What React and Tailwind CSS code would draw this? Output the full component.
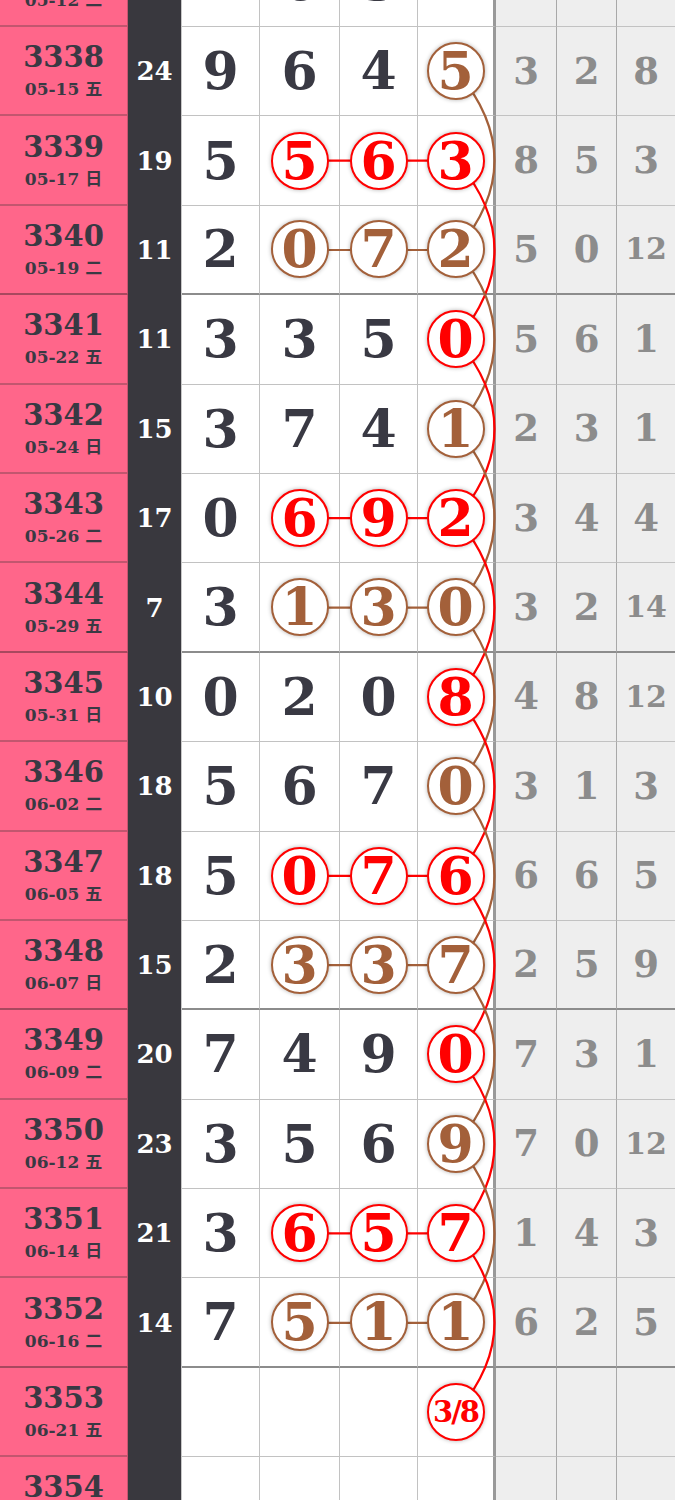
import React from "react";

// issue, date, sum, digits, marks (b = brown circle, r = red circle), grey cols
const rows = [
  ["3337", "05-12 二", "16", ["7", "6", "3", "7"], "----", ["4", "1", "2"]],
  ["3338", "05-15 五", "24", ["9", "6", "4", "5"], "---b", ["3", "2", "8"]],
  ["3339", "05-17 日", "19", ["5", "5", "6", "3"], "-rrr", ["8", "5", "3"]],
  ["3340", "05-19 二", "11", ["2", "0", "7", "2"], "-bbb", ["5", "0", "12"]],
  ["3341", "05-22 五", "11", ["3", "3", "5", "0"], "---r", ["5", "6", "1"]],
  ["3342", "05-24 日", "15", ["3", "7", "4", "1"], "---b", ["2", "3", "1"]],
  ["3343", "05-26 二", "17", ["0", "6", "9", "2"], "-rrr", ["3", "4", "4"]],
  ["3344", "05-29 五", "7", ["3", "1", "3", "0"], "-bbb", ["3", "2", "14"]],
  ["3345", "05-31 日", "10", ["0", "2", "0", "8"], "---r", ["4", "8", "12"]],
  ["3346", "06-02 二", "18", ["5", "6", "7", "0"], "---b", ["3", "1", "3"]],
  ["3347", "06-05 五", "18", ["5", "0", "7", "6"], "-rrr", ["6", "6", "5"]],
  ["3348", "06-07 日", "15", ["2", "3", "3", "7"], "-bbb", ["2", "5", "9"]],
  ["3349", "06-09 二", "20", ["7", "4", "9", "0"], "---r", ["7", "3", "1"]],
  ["3350", "06-12 五", "23", ["3", "5", "6", "9"], "---b", ["7", "0", "12"]],
  ["3351", "06-14 日", "21", ["3", "6", "5", "7"], "-rrr", ["1", "4", "3"]],
  ["3352", "06-16 二", "14", ["7", "5", "1", "1"], "-bbb", ["6", "2", "5"]],
  ["3353", "06-21 五", "", ["", "", "", "3/8"], "---r", ["", "", ""]],
  ["3354", "06-23 日", "", ["", "", "", ""], "----", ["", "", ""]],
];

const RED = "#ff0000";
const BROWN = "#a3603a";
const ROW_H = 89.4;
const TOP = 27; // top of row 3338
const COL_X = [221, 300, 379, 457];

const cy = (r) => TOP + r * ROW_H + 44.2;

const Circle = ({ color, text }) => {
  const small = text.length > 1;
  return (
    <div
      className={
        "relative z-10 flex h-[58px] w-[58px] items-center justify-center rounded-full border-2 bg-white font-bold leading-none shadow-[0_0_4px_rgba(0,0,0,0.3)] " +
        (color === "r" ? "border-[#ff0000] text-[#ff0000] " : "border-[#a3603a] text-[#a3603a] ") +
        (small ? "text-[29px] tracking-[-2px]" : "text-[52px]")
      }
    >
      {text}
    </div>
  );
};

const Row = ({ row }) => {
  const [no, date, sum, digits, marks, grey] = row;
  const groupEnd = ["3340", "3344", "3348", "3352"].includes(no);
  const cellB = groupEnd ? "border-b-2 border-b-[#8c8c8c]" : "border-b border-b-[#c2c2c2]";
  const pinkB = groupEnd ? "border-b-2 border-b-[#a9485f]" : "border-b-2 border-b-[#c2566f]";

  return (
    <div className="grid h-[89.4px] grid-cols-[128px_54px_78px_80px_78px_78px_61px_60px_58px]">
      <div className={"flex flex-col items-center justify-center border-r border-r-[#c85570] bg-[#ff668a] text-[#393943] " + pinkB}>
        <div className="text-[29px] font-bold leading-none">{no}</div>
        <div className="mt-[9px] text-[17px] font-bold leading-none">{date}</div>
      </div>
      <div className="flex items-center justify-center border-r border-r-[#c8c8c8] bg-[#39383e] text-[26px] font-bold text-white">
        {sum}
      </div>
      {digits.map((d, i) => (
        <div
          key={i}
          className={
            "flex items-center justify-center bg-white " +
            cellB +
            (i === 3 ? " border-r-[3px] border-r-[#999999]" : " border-r border-r-[#c2c2c2]")
          }
        >
          {marks[i] !== "-" ? (
            <Circle color={marks[i]} text={d} />
          ) : (
            <span className="text-[52px] font-bold leading-none text-[#393943]">{d}</span>
          )}
        </div>
      ))}
      {grey.map((g, i) => (
        <div
          key={i}
          className={
            "flex items-center justify-center bg-[#eeeeee] font-bold leading-none text-[#8c8c8c] " +
            cellB +
            (i < 2 ? " border-r border-r-[#a8a8a8]" : "") +
            (g.length > 1 ? " text-[30px]" : " text-[37px]")
          }
        >
          {g}
        </div>
      ))}
    </div>
  );
};

// line drawing over the table: row chains and the tail column curves
const Links = () => {
  const paths = [];
  rows.slice(1).forEach((row, r) => {
    const m = row[4];
    if (m === "-rrr" || m === "-bbb") {
      paths.push({ d: `M ${COL_X[1]} ${cy(r)} L ${COL_X[3]} ${cy(r)}`, c: m[1] });
    }
  });
  for (let r = 0; r + 2 <= 15; r++) {
    const c = rows[r + 1][4][3];
    if (c === "-") continue;
    const y1 = cy(r);
    const y2 = cy(r + 2);
    paths.push({ d: `M 457 ${y1} Q 532 ${(y1 + y2) / 2} 457 ${y2}`, c });
  }
  return (
    <svg className="pointer-events-none absolute left-0 top-0 z-[5]" width="675" height="1500" viewBox="0 0 675 1500">
      {paths.map((p, i) => (
        <path key={i} d={p.d} fill="none" stroke={p.c === "r" ? RED : BROWN} strokeWidth="2.2" />
      ))}
    </svg>
  );
};

export default function App() {
  return (
    <div className="relative h-[1500px] w-[675px] overflow-hidden bg-white font-['DejaVu_Serif','Noto_Sans_CJK_SC',serif]">
      <div className="mt-[-62.4px]">
        {rows.map((row) => (
          <Row key={row[0]} row={row} />
        ))}
      </div>
      <Links />
    </div>
  );
}
